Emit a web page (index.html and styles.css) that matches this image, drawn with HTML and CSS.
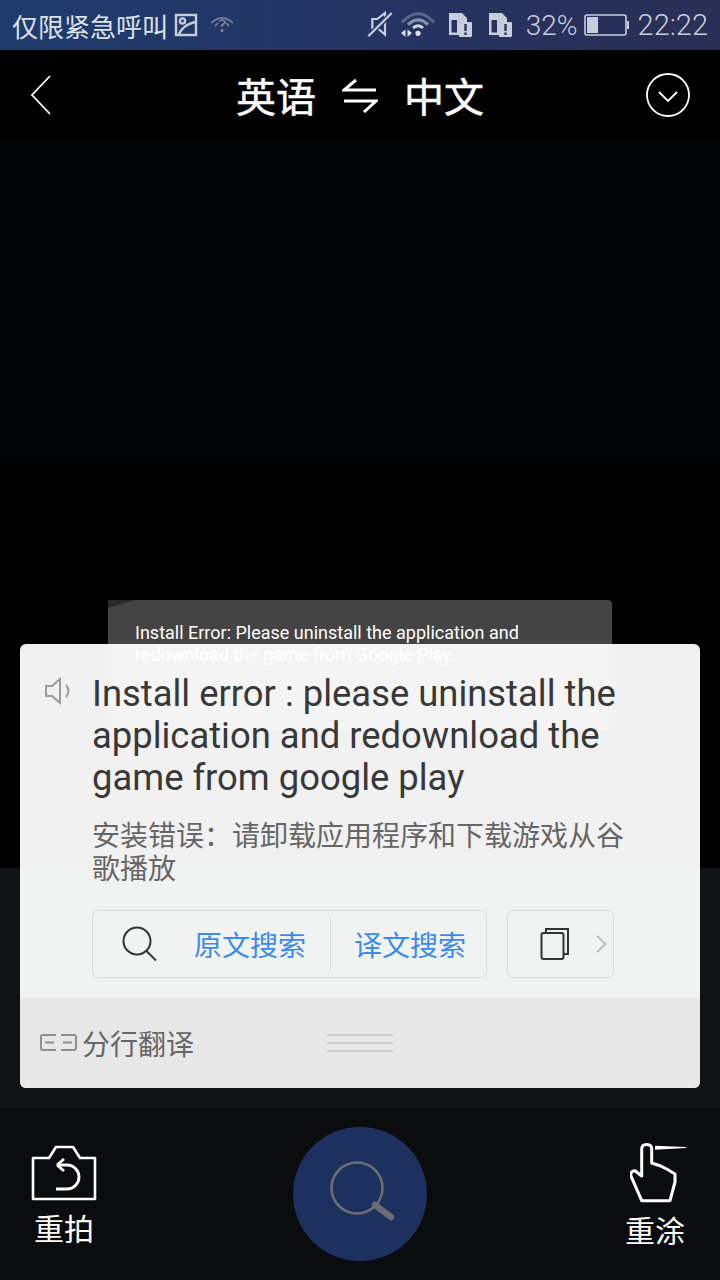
FILE: index.html
```html
<!DOCTYPE html>
<html lang="zh">
<head>
  <meta charset="utf-8">
  <meta name="viewport" content="width=device-width, initial-scale=1.0">
  <link rel="stylesheet" href="styles.css">
  <title>英语 中文</title>
</head>
<body>
  <div class="page">
    <!-- status bar -->
    <div class="status-bar">
      <span class="carrier">仅限紧急呼叫</span>
      <svg class="st-pic" width="24" height="24" viewBox="0 0 24 24" fill="none" stroke="#c8cddc" stroke-width="2.4">
        <rect x="2" y="2" width="20" height="20"/>
        <path d="M5 21 Q9 12 21 9"/>
        <circle cx="8.5" cy="8" r="2.6"/>
      </svg>
      <svg class="st-wifiq" width="24" height="20" viewBox="0 0 24 20" fill="none" stroke="#7f88a3" stroke-width="1.6">
        <path d="M1 8 Q12 -2 23 8"/>
        <path d="M5 11 L8 8 M19 11 L16 8"/>
        <path d="M9 6.5 Q12 3.5 15 6.5 Q15 8.5 12 10 V12"/>
        <circle cx="12" cy="15.5" r="1.5" fill="#7f88a3" stroke="none"/>
      </svg>
      <span class="st-space"></span>
      <svg class="st-mute" width="26" height="28" viewBox="0 0 26 28" fill="none" stroke="#c8cddc" stroke-width="2.2">
        <path d="M5.3 8 V17 H10.3 L18 23.7 V2 L10.3 8 Z"/>
        <path d="M1.3 25.3 L24.7 2" stroke="#2a3560" stroke-width="5"/>
        <path d="M1.3 25.3 L24.7 2"/>
      </svg>
      <svg class="st-wifi" width="36" height="26" viewBox="0 0 36 26" fill="none">
        <path d="M2 10.3 Q18 -7 34 10.3" stroke="#5d6584" stroke-width="3"/>
        <path d="M8 12.7 Q18 3 28 12.7" stroke="#8a91aa" stroke-width="3"/>
        <path d="M13 16 Q18 11.5 23 16" stroke="#d5d8e2" stroke-width="3"/>
        <circle cx="18" cy="21.3" r="2.6" fill="#dfe2ea"/>
        <path d="M5.5 17.5 V25 L1 21 Z M7.5 17.5 V25 L12 21 Z" fill="#dfe2ea"/>
      </svg>
      <svg class="st-sim" width="24" height="26" viewBox="0 0 24 26">
        <path fill-rule="evenodd" d="M1 1h13l5 5v4h-8v13H1z M3.5 8v12.5H9V8z" fill="#c8cddc"/>
        <rect x="11" y="10" width="13" height="15" rx="1" fill="#c8cddc"/>
        <path d="M16.3 12h2.4v7h-2.4zM16.3 20.5h2.4v2.5h-2.4z" fill="#2a3560"/>
      </svg>
      <svg class="st-sim" width="24" height="26" viewBox="0 0 24 26">
        <path fill-rule="evenodd" d="M1 1h13l5 5v4h-8v13H1z M3.5 8v12.5H9V8z" fill="#c8cddc"/>
        <rect x="11" y="10" width="13" height="15" rx="1" fill="#c8cddc"/>
        <path d="M16.3 12h2.4v7h-2.4zM16.3 20.5h2.4v2.5h-2.4z" fill="#2a3560"/>
      </svg>
      <span class="st-text st-pct">32%</span>
      <svg class="st-batt" width="45" height="22" viewBox="0 0 45 22" fill="none">
        <rect x="1" y="1" width="41" height="20" rx="2" stroke="#c8cddc" stroke-width="1.6"/>
        <rect x="3" y="3" width="11" height="16" fill="#c8cddc"/>
        <rect x="43" y="7" width="2" height="8" fill="#c8cddc"/>
      </svg>
      <span class="st-text st-time">22:22</span>
    </div>

    <!-- title row -->
    <div class="top-bar">
      <svg class="back" width="22" height="40" viewBox="0 0 22 40" fill="none" stroke="#fff" stroke-width="1.8">
        <path d="M20 1 L2 20 L20 39"/>
      </svg>
      <div class="lang-switch">
        <span>英语</span>
        <svg width="36" height="36" viewBox="0 0 36 36" fill="none" stroke="#fff" stroke-width="3">
          <path d="M14 3 L2 13 H34"/>
          <path d="M2 24 H34 L22 35"/>
        </svg>
        <span>中文</span>
      </div>
      <svg class="more" width="44" height="44" viewBox="0 0 44 44" fill="none" stroke="#fff" stroke-width="1.8">
        <circle cx="22" cy="22" r="21"/>
        <path d="M13 19 L22 28 L31 19"/>
      </svg>
    </div>

    <!-- the photo under the result card -->
    <div class="photo">
      <div class="band band-a"></div>
      <div class="band band-b">
        <div class="toast">
          <p>Install Error: Please uninstall the application and redownload the game from Google Play.</p>
        </div>
      </div>
      <div class="band band-c"></div>
    </div>

    <!-- bottom tools -->
    <div class="toolbar">
      <div class="tool">
        <svg width="66" height="56" viewBox="0 0 66 56" fill="none" stroke="#fff" stroke-width="2.6" stroke-linejoin="round">
          <path d="M2 13 H18 L25 2 H42 L49 13 H64 V54 H2 Z"/>
          <path d="M26 20 L33 14 M26 20 L33 26" stroke-width="2.8"/>
          <path d="M26 20 H36 A12 12 0 0 1 36 44 H25" stroke-width="2.8"/>
        </svg>
        <span>重拍</span>
      </div>
      <div class="search-btn">
        <svg width="70" height="66" viewBox="0 0 70 66" fill="none" stroke="#6b6d70">
          <circle cx="32" cy="27" r="25.5" stroke-width="2.6"/>
          <path d="M50 44 L66 56" stroke-width="6.5" stroke-linecap="round"/>
        </svg>
      </div>
      <div class="tool tool-hand">
        <svg width="58" height="60" viewBox="0 0 58 60" fill="none" stroke="#fff" stroke-width="3" stroke-linejoin="round">
          <path d="M11.7 57.7 L1 33 Q0 28 5 27.7 L11.7 33 V6 Q11.7 1.5 16.7 1.5 Q21.7 1.5 21.7 6 V20 L30 22.7 L36.7 26 L45 31 V39 L40 57.7 Z"/>
          <path d="M25 2.7 L56 4 V5 L25 6.7 Z" fill="#fff" stroke="none"/>
        </svg>
        <span>重涂</span>
      </div>
    </div>

    <!-- result card -->
    <div class="card">
      <div class="card-main">
        <div class="source">
          <svg class="speaker" width="30" height="28" viewBox="0 0 30 28" fill="none" stroke="#9c9c9c" stroke-width="2">
            <path d="M2 9 H8 L16 2 V26 L8 19 H2 Z"/>
            <path d="M22 8 Q27 14 22 20"/>
          </svg>
          <p class="en">Install error : please uninstall the application and redownload the game from google play</p>
        </div>
        <p class="zh">安装错误&#65306;请卸载应用程序和下载游戏从谷歌播放</p>
        <div class="actions">
          <div class="btn-group">
            <svg class="ic-search" width="36" height="36" viewBox="0 0 36 36" fill="none" stroke="#333" stroke-width="2">
              <circle cx="15" cy="15" r="13.5"/>
              <path d="M24.5 25 L34 34.5"/>
            </svg>
            <span class="link link-first">原文搜索</span>
            <span class="divider"></span>
            <span class="link link-second">译文搜索</span>
          </div>
          <div class="btn-copy">
            <svg width="30" height="34" viewBox="0 0 30 34" fill="none" stroke="#333" stroke-width="2">
              <rect x="1.5" y="6" width="22" height="26" rx="2"/>
              <path d="M6 5 V2 H28 V27 H24"/>
            </svg>
            <svg class="chev" width="11" height="18" viewBox="0 0 11 18" fill="none" stroke="#bdbdbd" stroke-width="1.8">
              <path d="M1 1 L9.5 9 L1 17"/>
            </svg>
          </div>
        </div>
      </div>
      <div class="card-foot">
        <svg width="37" height="20" viewBox="0 0 37 20" fill="none" stroke="#8f8f8f" stroke-width="2">
          <path d="M16 2 H3 Q1 2 1 4 V15 Q1 17 3 17 H16"/>
          <path d="M21 2 H34 Q36 2 36 4 V15 Q36 17 34 17 H21"/>
          <path d="M5 9.5 H14 M23 9.5 H32"/>
        </svg>
        <span class="foot-label">分行翻译</span>
        <div class="grip"><i></i><i></i><i></i></div>
      </div>
    </div>
  </div>
</body>
</html>
```

FILE: styles.css
```css
* {
  box-sizing: border-box;
}

body {
  margin: 0;
  background: #000;
  font-family: Roboto, "Noto Sans CJK SC", sans-serif;
}

p {
  margin: 0;
}

svg {
  display: block;
  flex: none;
}

.page {
  position: relative;
  display: flex;
  flex-direction: column;
  width: 720px;
  height: 1280px;
  overflow: hidden;
}

/* status bar */
.status-bar {
  display: flex;
  align-items: center;
  height: 50px;
  padding: 0 12px;
  background: linear-gradient(90deg, #1f3b6e 0%, #243463 50%, #2a2f55 100%);
  color: #c8cddc;
}

.carrier {
  font-size: 26px;
  color: #dde1ea;
  font-family: "Noto Sans CJK SC", sans-serif;
}

.st-pic {
  margin-left: 6px;
}

.st-wifiq {
  margin-left: 12px;
}

.st-space {
  flex: 1;
}

.st-mute {
  margin-right: 7px;
}

.st-wifi {
  margin-right: 12px;
}

.st-sim {
  margin-right: 16px;
}

.st-text {
  font-weight: 300;
  font-size: 28px;
}

.st-time {
  font-size: 29px;
}

.st-pct {
  margin-left: -2px;
}

.st-batt {
  margin-left: 6px;
  margin-right: 9px;
}

/* title row */
.top-bar {
  display: grid;
  grid-template-columns: 1fr auto 1fr;
  align-items: center;
  height: 90px;
  padding: 0 30px;
  background: #000;
}

.more {
  justify-self: end;
}

.lang-switch {
  display: flex;
  align-items: center;
  gap: 26px;
  font-size: 40px;
  font-weight: 400;
  color: #fff;
  -webkit-text-stroke: 0.5px #fff;
  font-family: "Noto Sans CJK SC", sans-serif;
}

/* photo */
.photo {
  flex: 1;
  display: flex;
  flex-direction: column;
}

.band-a {
  height: 322px;
  background: #040506;
}

.band-b {
  height: 406px;
  padding-top: 138px;
  padding-left: 108px;
  background: #000;
}

.band-c {
  flex: 1;
  background: #111317;
}

.toast {
  position: relative;
  width: 504px;
  height: 130px;
  padding: 22px 60px 22px 27px;
  border-radius: 4px;
  background: #444;
  color: #fff;
  font-size: 18px;
  line-height: 22px;
}

.toast::before {
  content: "";
  position: absolute;
  left: 0;
  top: 0;
  width: 26px;
  height: 8px;
  background: #2a2a2a;
  clip-path: polygon(0 0, 100% 0, 0 100%);
}

/* bottom tools */
.toolbar {
  display: flex;
  align-items: center;
  justify-content: space-between;
  height: 172px;
  padding: 0 35px 0 34px;
  background: #0b0c0e;
}

.tool {
  display: flex;
  flex-direction: column;
  align-items: center;
  gap: 8px;
  width: 60px;
  margin-top: 1px;
  color: #fff;
  font-size: 30px;
  line-height: 36px;
  font-family: "Noto Sans CJK SC", sans-serif;
}

.tool-hand svg {
  margin-left: 8px;
}

.search-btn {
  display: flex;
  align-items: center;
  justify-content: center;
  width: 134px;
  height: 134px;
  border-radius: 50%;
  background: #1c315f;
}

.search-btn svg {
  overflow: visible;
}

/* result card */
.card {
  position: absolute;
  left: 20px;
  top: 644px;
  width: 680px;
  height: 444px;
  display: flex;
  flex-direction: column;
  border-radius: 6px;
  overflow: hidden;
  background: rgba(255, 255, 255, 0.945);
}

.card-main {
  flex: 1;
  padding: 29px 0 0 24px;
}

.source {
  display: flex;
  gap: 18px;
}

.speaker {
  margin-top: 4px;
}

.en {
  width: 560px;
  color: #383838;
  font-size: 36.4px;
  line-height: 42px;
}

.zh {
  width: 540px;
  margin: 19px 0 0 48px;
  color: #666;
  font-size: 28px;
  line-height: 33px;
  font-family: "Noto Sans CJK SC", sans-serif;
}

.actions {
  display: flex;
  gap: 20px;
  margin: 26px 0 0 48px;
}

.btn-group,
.btn-copy {
  display: flex;
  align-items: center;
  height: 68px;
  border: 1px solid #dcdcdc;
  border-radius: 6px;
}

.btn-group {
  width: 395px;
  padding-left: 29px;
}

.link {
  color: #3a8bee;
  font-size: 28px;
  font-family: "Noto Sans CJK SC", sans-serif;
}

.link-first {
  margin-left: 36px;
}

.divider {
  width: 1px;
  height: 56px;
  margin-left: 24px;
  background: #dcdcdc;
}

.link-second {
  margin-left: 23px;
}

.btn-copy {
  width: 107px;
  padding-left: 32px;
}

.chev {
  margin-left: 26px;
}

.card-foot {
  display: flex;
  align-items: center;
  height: 90px;
  padding-left: 20px;
  background: #e8e8e8;
}

.foot-label {
  margin-left: 5px;
  color: #666;
  font-size: 28px;
  font-family: "Noto Sans CJK SC", sans-serif;
}

.grip {
  display: flex;
  flex-direction: column;
  gap: 6px;
  width: 66px;
  margin-left: 133px;
}

.grip i {
  display: block;
  height: 2px;
  background: #ccc;
}
```
